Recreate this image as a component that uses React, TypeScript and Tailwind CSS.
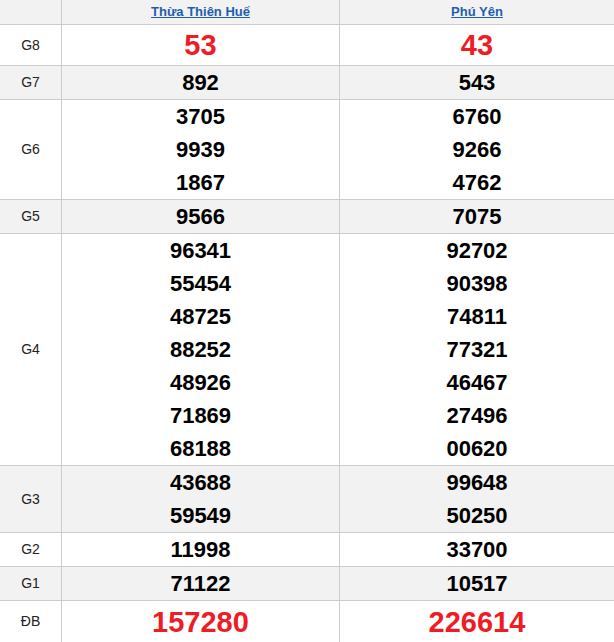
import React from "react";

type Row = { label: string; h: string; gray: boolean; a: string[]; b: string[]; big?: boolean };

const rows: Row[] = [
  { label: "G8", h: "h-[41px]", gray: false, a: ["53"], b: ["43"], big: true },
  { label: "G7", h: "h-[34px]", gray: true, a: ["892"], b: ["543"] },
  { label: "G6", h: "h-[100px]", gray: false, a: ["3705", "9939", "1867"], b: ["6760", "9266", "4762"] },
  { label: "G5", h: "h-[34px]", gray: true, a: ["9566"], b: ["7075"] },
  {
    label: "G4",
    h: "h-[232px]",
    gray: false,
    a: ["96341", "55454", "48725", "88252", "48926", "71869", "68188"],
    b: ["92702", "90398", "74811", "77321", "46467", "27496", "00620"],
  },
  { label: "G3", h: "h-[67px]", gray: true, a: ["43688", "59549"], b: ["99648", "50250"] },
  { label: "G2", h: "h-[34px]", gray: false, a: ["11998"], b: ["33700"] },
  { label: "G1", h: "h-[34px]", gray: true, a: ["71122"], b: ["10517"] },
  { label: "ĐB", h: "h-[42px]", gray: false, a: ["157280"], b: ["226614"], big: true },
];

function Nums({ list, big }: { list: string[]; big?: boolean }) {
  return (
    <div className="flex flex-col items-center justify-center h-full">
      {list.map((n) =>
        big ? (
          <div key={n} className="text-[29px] leading-[40px] font-bold text-[#ee1c25]">
            {n}
          </div>
        ) : (
          <div key={n} className="text-[22px] leading-[33px] font-bold text-black">
            {n}
          </div>
        )
      )}
    </div>
  );
}

export default function App() {
  return (
    <div
      className="w-[614px] h-[642px] overflow-hidden bg-white"
      style={{ fontFamily: '"Liberation Sans", Arial, sans-serif' }}
    >
      <div className="grid grid-cols-[62px_278px_1fr]">
        <div className="h-[25px] bg-[#f2f2f2] border-b border-r border-[#cccccc]" />
        <div className="h-[25px] bg-[#f2f2f2] border-b border-r border-[#cccccc] flex items-center justify-center">
          <a className="text-[13px] font-bold text-[#1e5fad] underline">Thừa Thiên Huế</a>
        </div>
        <div className="h-[25px] bg-[#f2f2f2] border-b border-[#cccccc] flex items-center justify-center">
          <a className="text-[13px] font-bold text-[#1e5fad] underline">Phú Yên</a>
        </div>
        {rows.map((r) => {
          const bg = r.gray ? "bg-[#f2f2f2]" : "bg-white";
          return (
            <React.Fragment key={r.label}>
              <div
                className={`${r.h} ${bg} border-b border-r border-[#cccccc] flex items-center justify-center text-[14px] text-[#222222]`}
              >
                {r.label}
              </div>
              <div className={`${r.h} ${bg} border-b border-r border-[#cccccc]`}>
                <Nums list={r.a} big={r.big} />
              </div>
              <div className={`${r.h} ${bg} border-b border-[#cccccc]`}>
                <Nums list={r.b} big={r.big} />
              </div>
            </React.Fragment>
          );
        })}
      </div>
    </div>
  );
}
